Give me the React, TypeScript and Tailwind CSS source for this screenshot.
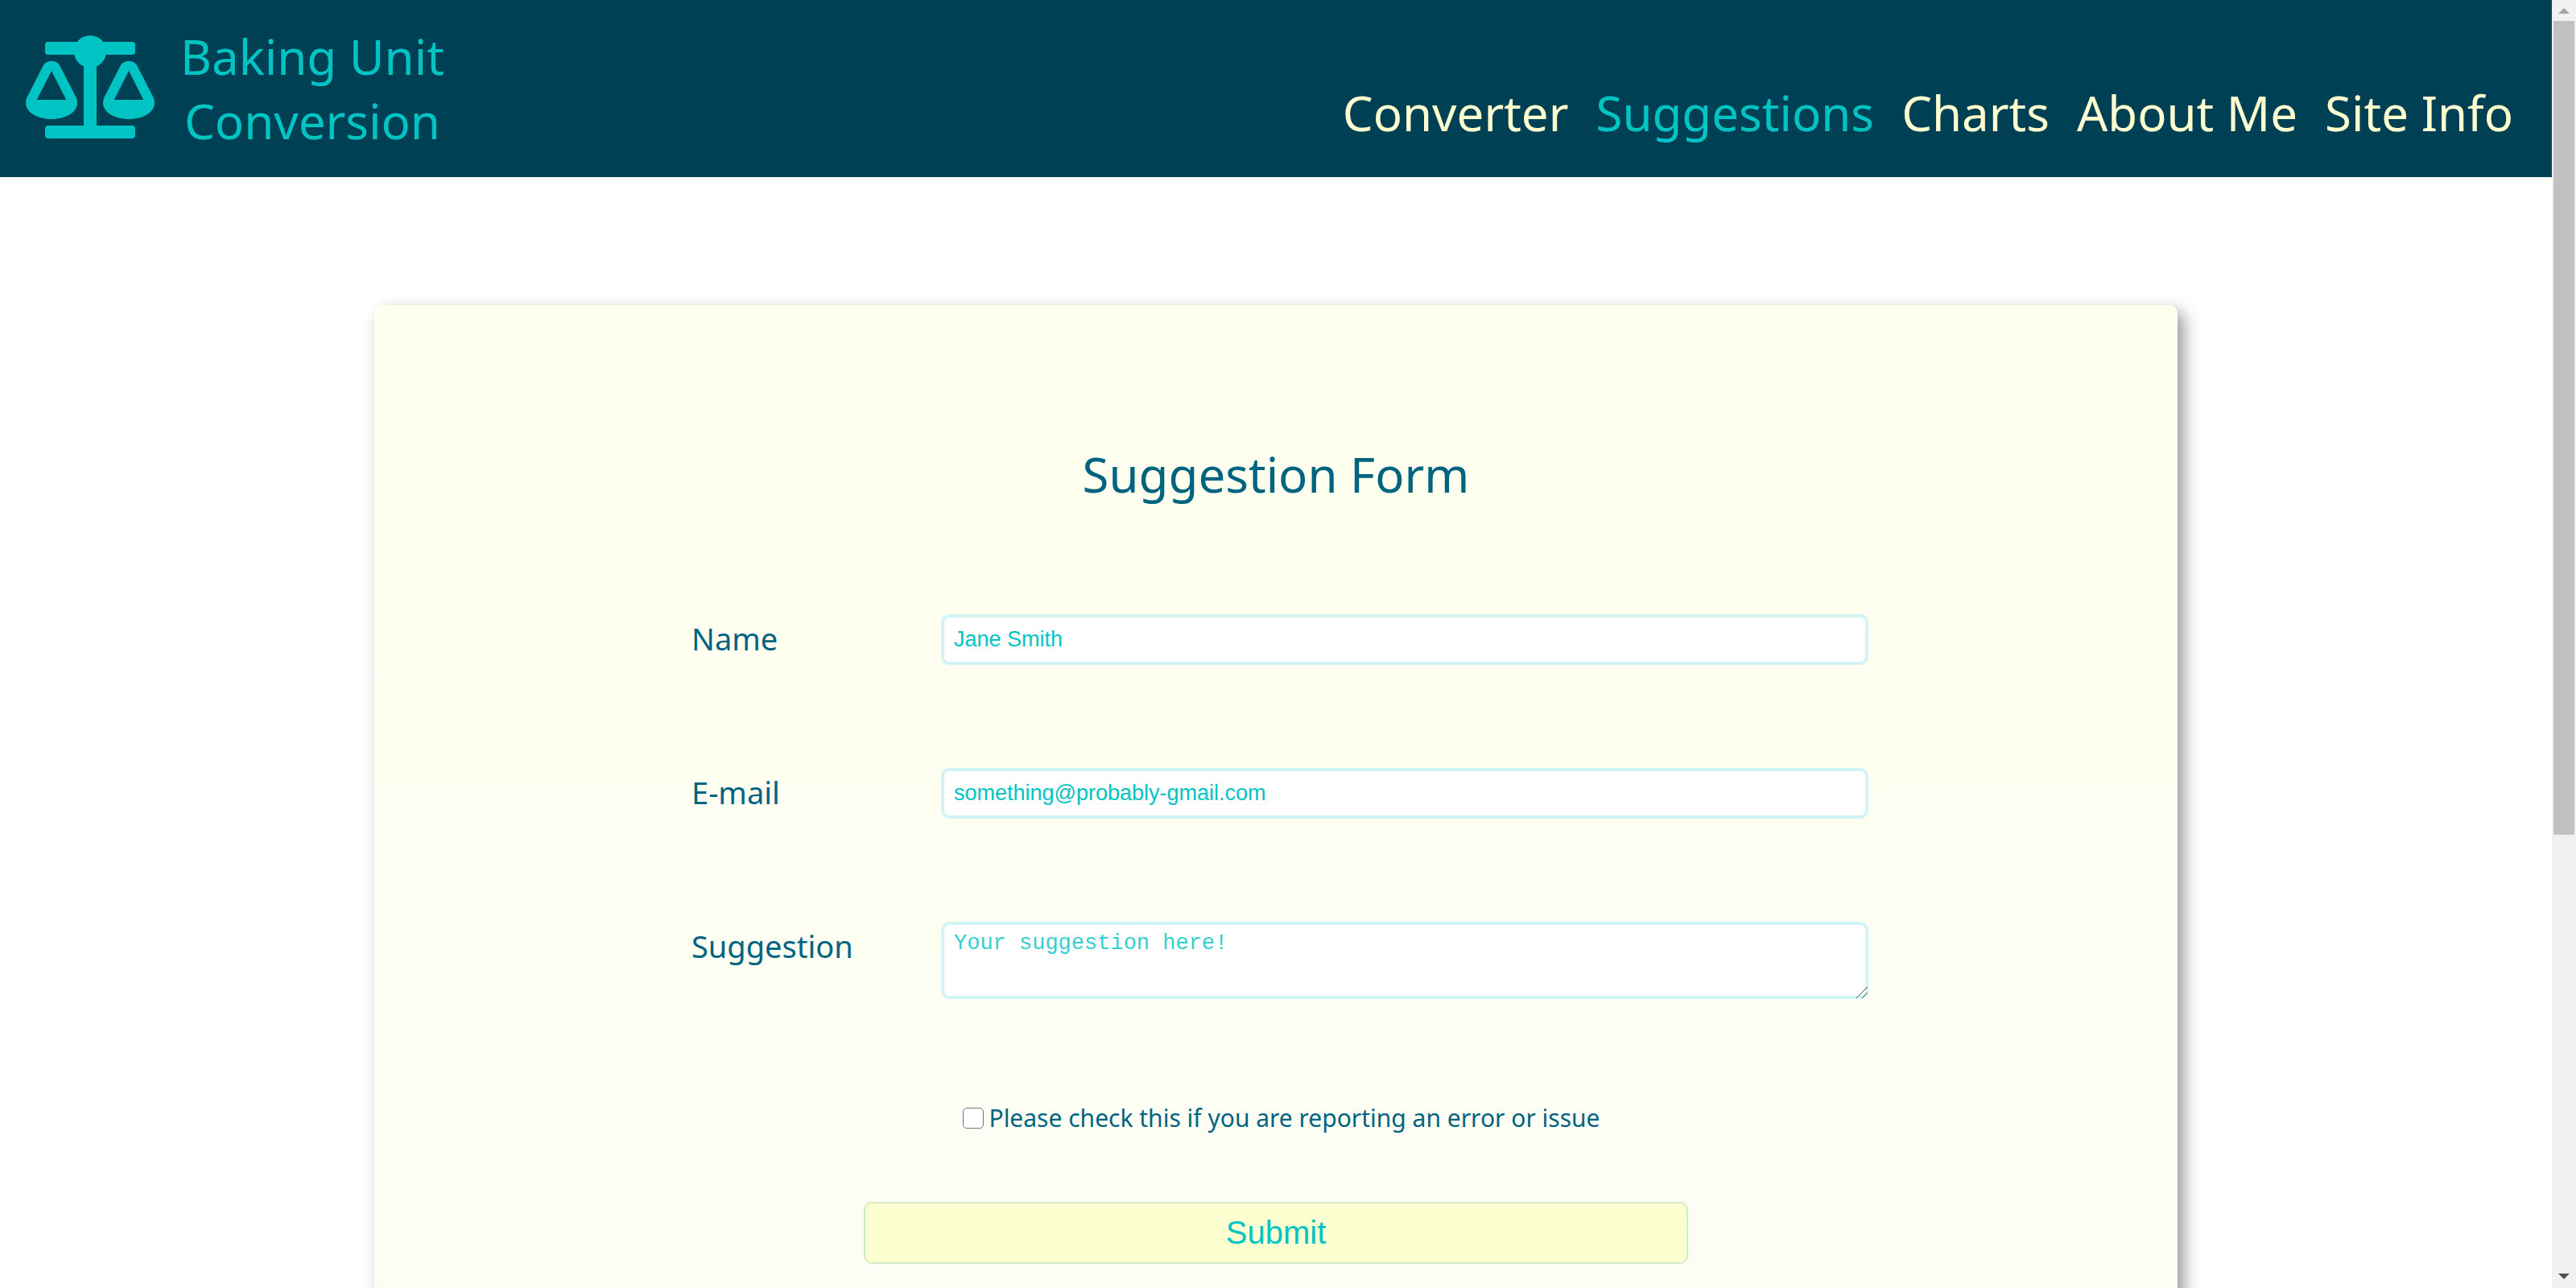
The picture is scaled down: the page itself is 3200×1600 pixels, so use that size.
const links = ["Converter", "Suggestions", "Charts", "About Me", "Site Info"];

const fieldClass =
  "w-[36vw] rounded-[10px] border-4 border-[#d2f4f4] bg-white px-3 text-[27px] text-[#00c4c4] placeholder:text-[#00c4c4] outline-none";
const labelClass = "flex-1 pl-[10px] text-[38px] leading-[60px]";

function ScalesIcon() {
  const pan =
    "M21.2 38.4A12 12 0 0 1 42.8 38.4L61.5 75C63.2 78 64 81 64 84C64 95 50 104 32 104S0 95 0 84C0 81 .8 78 2.5 75ZM32 44L13.7 80H50.3Z";
  return (
    <svg viewBox="0 0 160 128" className="h-32 w-40 shrink-0 fill-[#00c4c4]" aria-hidden="true">
      <rect x="24" y="8" width="112" height="16" rx="4" />
      <circle cx="80" cy="20" r="20" />
      <rect x="72" y="30" width="16" height="90" />
      <rect x="24" y="112" width="112" height="16" rx="4" />
      <path fillRule="evenodd" d={pan} />
      <path fillRule="evenodd" d={pan} transform="translate(96 0)" />
    </svg>
  );
}

function Header() {
  return (
    <header className="flex items-end justify-between bg-[#004055] pt-[26px] pb-[30px] pr-12 pl-8">
      <a href="#home" className="flex items-center gap-8 text-center text-[60px] leading-[80px] text-[#00c4c4]">
        <ScalesIcon />
        <span className="pt-1">
          Baking Unit
          <br />
          Conversion
        </span>
      </a>
      <nav className="flex gap-[34px] pb-[10px] text-[60px] leading-[80px]">
        {links.map((link) => (
          <a
            key={link}
            href={"#" + link}
            className={link === "Suggestions" ? "text-[#00c4c4]" : "text-[#ffffd0]"}
          >
            {link}
          </a>
        ))}
      </nav>
    </header>
  );
}

function SuggestionForm() {
  return (
    <form
      onSubmit={(e) => e.preventDefault()}
      className="mx-auto mt-[159px] flex w-[70vw] flex-col items-center rounded-[10px] bg-linear-to-b from-[#feffef] from-20% to-[#fafcfa] pt-[170px] pb-[640px] text-[#006480] shadow-[8px_8px_20px_rgba(0,0,0,0.4)]"
    >
      <h1 className="text-[60px] leading-[80px]">Suggestion Form</h1>
      <div className="mt-[134px] flex w-[46vw] flex-col gap-32">
        <div className="flex items-start">
          <label htmlFor="name" className={labelClass}>Name</label>
          <input id="name" type="text" placeholder="Jane Smith" className={fieldClass + " h-[63px] font-['Liberation_Sans',sans-serif]"} />
        </div>
        <div className="flex items-start">
          <label htmlFor="email" className={labelClass}>E-mail</label>
          <input id="email" type="email" placeholder="something@probably-gmail.com" className={fieldClass + " h-[63px] font-['Liberation_Sans',sans-serif]"} />
        </div>
        <div className="flex items-start">
          <label htmlFor="suggestion" className={labelClass}>Suggestion</label>
          <div className="relative flex">
            <textarea id="suggestion" placeholder="Your suggestion here!" className={fieldClass + " h-24 resize-none py-2 leading-[30px] placeholder:opacity-80 font-['Liberation_Mono',monospace]"} />
            <svg viewBox="0 0 14 14" className="pointer-events-none absolute right-px bottom-px size-[14px] fill-none stroke-[#505050]" aria-hidden="true">
              <path d="M0 14L14 0M7 14L14 7" />
            </svg>
          </div>
        </div>
      </div>
      <div className="mt-[124px] flex items-center gap-[6px] pl-[14px]">
        <input
          id="issue"
          type="checkbox"
          className="size-[26px] appearance-none rounded-[5px] border border-[#767676] bg-white checked:bg-[#006480]"
        />
        <label htmlFor="issue" className="text-[30px] leading-[48px]">
          Please check this if you are reporting an error or issue
        </label>
      </div>
      <button
        type="submit"
        className="mt-20 h-[77px] w-[32vw] rounded-[10px] border-2 border-[#d0ecc4] bg-[#fcffd0] pb-[2px] font-['Liberation_Sans',sans-serif] text-[40px] text-[#00c4c4]"
      >
        Submit
      </button>
    </form>
  );
}

function ScrollBar() {
  return (
    <div className="flex w-[30px] shrink-0 flex-col items-center bg-[#f1f1f1]" aria-hidden="true">
      <div className="flex h-[26px] items-center">
        <svg viewBox="0 0 14 7" className="h-[7px] w-[14px] fill-[#a3a3a3]"><path d="M0 7L7 0L14 7Z" /></svg>
      </div>
      <div className="flex w-[26px] flex-1 flex-col">
        <div className="h-[65.5%] bg-[#c1c1c1]" />
      </div>
      <div className="flex h-[30px] items-center">
        <svg viewBox="0 0 14 7" className="h-[7px] w-[14px] fill-[#505050]"><path d="M0 0L7 7L14 0Z" /></svg>
      </div>
    </div>
  );
}

export default function App() {
  return (
    <div className="flex h-screen overflow-hidden bg-white font-['Noto_Sans',sans-serif]">
      <div className="min-w-0 flex-1 overflow-hidden">
        <Header />
        <main>
          <SuggestionForm />
        </main>
      </div>
      <ScrollBar />
    </div>
  );
}
